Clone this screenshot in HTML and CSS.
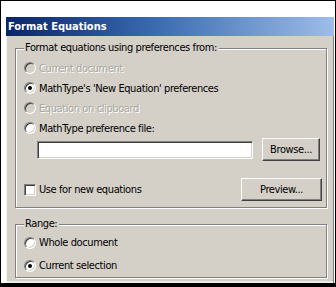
FILE: index.html
```html
<!DOCTYPE html>
<html lang="en">
<head>
  <meta charset="UTF-8" />
  <title>Format Equations</title>
  <link rel="stylesheet" href="styles.css">
</head>
<body>
  <div class="screen">
    <div class="dialog">
      <div class="titlebar">Format Equations</div>
      <div class="dialog-body">

        <div class="group group-prefs">
          <div class="group-title">Format equations using preferences from:</div>
          <div class="row disabled"><span class="radio"></span><span class="label">Current document</span></div>
          <div class="row"><span class="radio checked"></span><span class="label">MathType's 'New Equation' preferences</span></div>
          <div class="row disabled"><span class="radio"></span><span class="label">Equation on clipboard</span></div>
          <div class="row"><span class="radio"></span><span class="label">MathType preference file:</span></div>
          <div class="file-row">
            <div class="textbox"></div>
            <button class="btn btn-browse">Browse...</button>
          </div>
          <div class="check-row">
            <span class="checkbox"></span><span class="label">Use for new equations</span>
            <button class="btn btn-preview">Preview...</button>
          </div>
        </div>

        <div class="group group-range">
          <div class="group-title">Range:</div>
          <div class="row tall"><span class="radio"></span><span class="label">Whole document</span></div>
          <div class="row tall"><span class="radio checked"></span><span class="label">Current selection</span></div>
        </div>

      </div>
    </div>
  </div>
</body>
</html>
```

FILE: styles.css
```css
* { box-sizing: border-box; margin: 0; padding: 0; }
body {
  font-family: "DejaVu Sans Condensed", "DejaVu Sans", sans-serif;
  font-size: 11px;
  letter-spacing: -0.4px;
  color: #000;
  background: #fff;
}
.screen {
  width: 336px;
  height: 287px;
  border: 1px solid #000;
  border-bottom-width: 4px;
  padding: 16px 1px 0 5px;
  background: #fff;
}
.dialog {
  height: 266px;
  background: #d4d0c8;
  box-shadow: inset 1px 0 0 #f4f2ee, inset -1px 0 0 #808080, inset 0 -2px 0 #eeece8;
}
.titlebar {
  height: 19px;
  line-height: 19px;
  padding-left: 2px;
  color: #fff;
  font-weight: bold;
  font-size: 11px;
  letter-spacing: 0;
  background: linear-gradient(to right, #0a246a 0%, #3a6ab0 45%, #9ebde9 100%);
}
.dialog-body {
  padding: 12px 7px 0 9px;
}

/* etched group box */
.group {
  border: 1px solid #808080;
  box-shadow: 1px 1px 0 #fff, inset 1px 1px 0 #fff;
  padding: 0 3px 6px 8px;
}
.group-range {
  margin-top: 16px;
  padding-bottom: 0;
}
.group-title {
  width: fit-content;
  margin: -8px 0 3px 0;
  padding: 0 2px 0 1px;
  line-height: 14px;
  background: #d4d0c8;
}
.group-range .group-title { margin-bottom: 0; }

.row {
  display: flex;
  align-items: center;
  height: 20px;
}
.row.tall { height: 23px; }
.label { margin-left: 3px; }
.disabled .label {
  color: #aaa8a2;
  text-shadow: 1px 1px 0 #fff;
}

/* classic radio */
.radio {
  width: 12px;
  height: 12px;
  border-radius: 50%;
  background: #fff;
  border: 1px solid;
  border-color: #808080 #fff #fff #808080;
  box-shadow: inset 1px 1px 0 #404040, inset -1px -1px 0 #d4d0c8;
  display: flex;
  align-items: center;
  justify-content: center;
}
.disabled .radio { background: #d4d0c8; }
.radio.checked::after {
  content: "";
  width: 4px;
  height: 4px;
  border-radius: 50%;
  background: #000;
}

.file-row {
  display: flex;
  align-items: center;
  height: 23px;
  padding-left: 13px;
}
.textbox {
  width: 216px;
  height: 18px;
  background: #fff;
  border: 1px solid;
  border-color: #808080 #fff #fff #808080;
  box-shadow: inset 1px 1px 0 #404040, inset -1px -1px 0 #d4d0c8;
}

/* classic push button */
.btn {
  font-family: inherit;
  font-size: 11px;
  letter-spacing: inherit;
  color: #000;
  height: 23px;
  background: #d4d0c8;
  border: 1px solid;
  border-color: #fff #404040 #404040 #fff;
  box-shadow: inset -1px -1px 0 #808080;
}
.btn-browse { width: 58px; margin-left: 9px; }

.check-row {
  display: flex;
  align-items: center;
  height: 23px;
  margin-top: 17px;
}
.checkbox {
  width: 12px;
  height: 12px;
  background: #fff;
  border: 1px solid;
  border-color: #808080 #fff #fff #808080;
  box-shadow: inset 1px 1px 0 #404040, inset -1px -1px 0 #d4d0c8;
}
.btn-preview { width: 81px; margin-left: auto; margin-right: 1px; }
```
